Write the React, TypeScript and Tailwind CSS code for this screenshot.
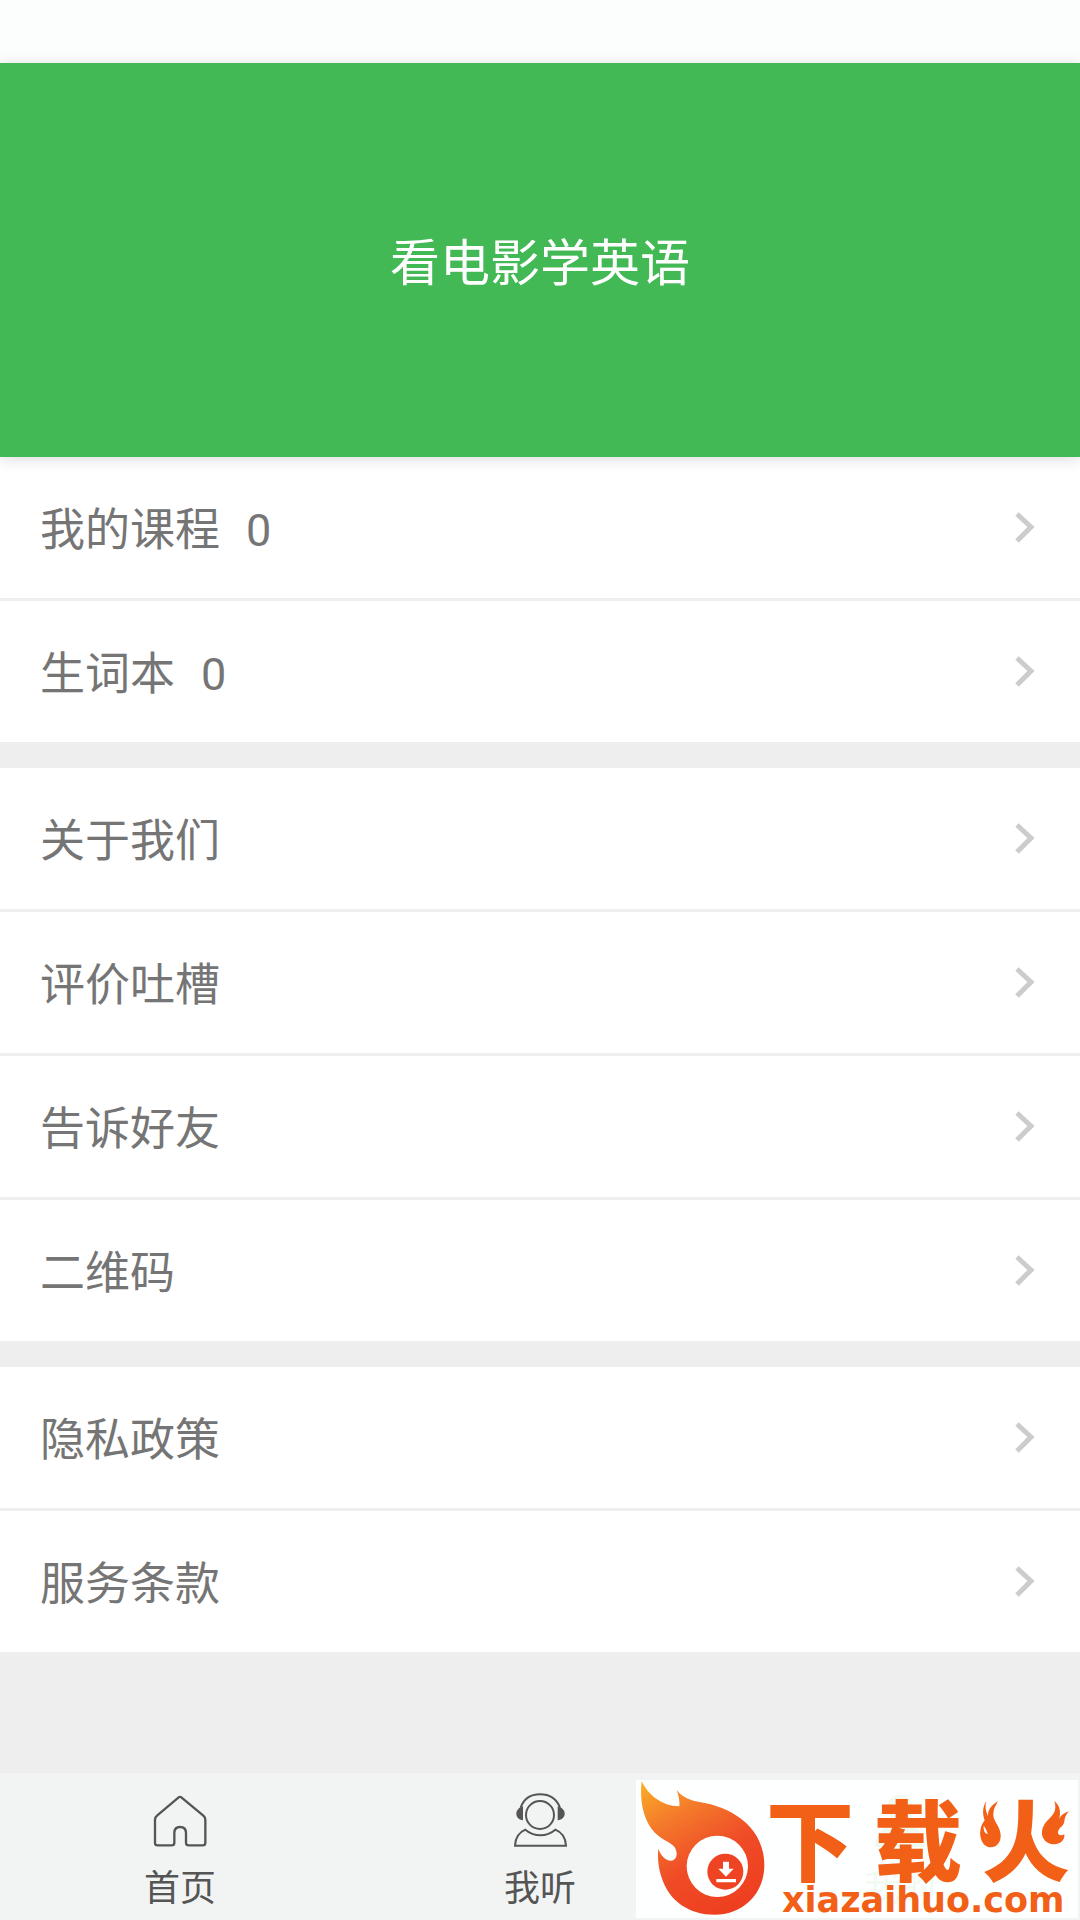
import React from 'react';

interface MenuItem {
  label: string;
  count?: number;
}

interface TabItem {
  label: string;
  icon: React.ReactNode;
  active?: boolean;
}

const menuGroups: MenuItem[][] = [
  [
    { label: '我的课程', count: 0 },
    { label: '生词本', count: 0 },
  ],
  [{ label: '关于我们' }, { label: '评价吐槽' }, { label: '告诉好友' }, { label: '二维码' }],
  [{ label: '隐私政策' }, { label: '服务条款' }],
];

const Chevron = () => (
  <svg className="h-8 w-6" viewBox="0 0 24 32" fill="none" stroke="#cccccc" strokeWidth="5" aria-hidden="true">
    <path d="M5 2 L19 15 L5 29" />
  </svg>
);

const HomeIcon = () => (
  <svg className="size-14" viewBox="156 98 168 168" fill="none" stroke="currentColor" strokeWidth="7" strokeLinejoin="round" aria-hidden="true">
    <path d="M236 111 Q240 108 244 111 L310 166 Q316 171 316 178 V247 Q316 255 308 255 H267 Q258 255 258 247 V218 Q258 200 240 200 Q223 200 223 218 V247 Q223 255 214 255 H173 Q165 255 165 247 V178 Q165 171 171 166 Z" />
  </svg>
);

const ListenIcon = () => (
  <svg className="size-14" viewBox="156 98 168 168" fill="none" stroke="currentColor" strokeWidth="6" aria-hidden="true">
    <circle cx="240" cy="164" r="42" />
    <path d="M182 142 C191 116 213 102 240 102 C268 102 290 116 300 142" />
    <path d="M189 138 V180 C176 178 169 170 169 160 C169 149 178 141 189 138 Z" fill="currentColor" stroke="none" />
    <path d="M293 138 V180 C306 178 314 170 314 160 C314 149 305 141 293 138 Z" fill="currentColor" stroke="none" />
    <path d="M196 208 C222 230 260 230 286 208 C306 216 317 234 318 256 H165 C166 234 177 216 196 208 Z" />
  </svg>
);

const MineIcon = () => (
  <svg className="size-14" viewBox="0 0 56 56" fill="currentColor" aria-hidden="true">
    <circle cx="28" cy="15" r="13" />
    <path d="M3 54 C3 38 14 32 28 32 C42 32 53 38 53 54 Z" />
  </svg>
);

const tabs: TabItem[] = [
  { label: '首页', icon: <HomeIcon /> },
  { label: '我听', icon: <ListenIcon /> },
  { label: '我的', icon: <MineIcon />, active: true },
];

const FlameLogo = () => (
  <svg className="h-[138px] w-32 shrink-0" viewBox="60 60 384 414" aria-hidden="true">
    <defs>
      <linearGradient id="flame" x1="70" y1="70" x2="300" y2="460" gradientUnits="userSpaceOnUse">
        <stop offset="0" stopColor="#fbad26" />
        <stop offset="0.3" stopColor="#f47a2b" />
        <stop offset="0.65" stopColor="#ef4b27" />
        <stop offset="1" stopColor="#ee4020" />
      </linearGradient>
    </defs>
    <path
      fill="url(#flame)"
      d="M71 64 C91 105 130 138 184 139 C186 122 181 105 176 90 C192 111 218 122 248 127 C292 134 334 150 370 177 C413 209 439 258 439 315 C439 401 375 464 290 464 C215 464 153 425 130 350 C121 322 118 294 121 266 C128 287 144 303 160 302 C177 300 181 279 169 260 C154 244 122 236 101 207 C73 168 65 115 71 64 Z"
    />
    <circle cx="298" cy="319" r="92" fill="#fff" />
    <circle cx="322" cy="335" r="54" fill="#ee4424" />
    <path d="M315 305 H333 V326 H347 L324 350 L301 326 H315 Z M295 357 H354 V367 H295 Z" fill="#fff" />
  </svg>
);

// Flames stand in for the two dots of the last character
const TwinFlames = () => (
  <svg className="absolute top-2 -left-2 h-12 w-[100px]" viewBox="400 130 300 144" aria-hidden="true">
    <path d="M400 130 H514 V232 L480 274 H400 Z M592 130 H700 V274 H620 L592 240 Z" fill="#fff" />
    <g fill="#f26018">
      <path d="M437 133 C424 153 426 174 432 191 C421 204 416 225 420 243 C425 263 437 272 450 272 C469 272 481 256 480 235 C479 207 455 193 458 170 C459 155 466 145 472 133 C452 146 441 160 442 178 C435 164 432 149 437 133 Z" />
      <path d="M641 133 C650 163 638 174 621 191 C607 205 600 225 606 241 C613 257 628 263 642 263 C660 262 673 250 671 233 C663 238 653 236 652 229 C652 212 669 211 671 194 C672 182 676 173 685 164 C669 169 658 178 655 190 C661 166 659 148 641 133 Z" />
    </g>
    <path d="M429 207 C428 221 432 231 441 232 C439 222 434 214 429 207 Z" fill="#fff" />
  </svg>
);

const SiteBadge = () => (
  <div className="absolute right-[2px] bottom-[2px] flex bg-white/92 pr-2 pl-0.5 text-[#f26018]">
    <FlameLogo />
    <div className="flex flex-col">
      <div className="flex h-[106px] gap-5 pt-3 font-['Noto_Sans_CJK_SC',sans-serif] text-[88px] leading-[88px] font-black">
        <span>下</span>
        <span>载</span>
        <span className="relative">
          火
          <TwinFlames />
        </span>
      </div>
      <a href="#" className="pl-4 font-['DejaVu_Sans',sans-serif] text-[35px] leading-7 font-bold">
        xiazaihuo.com
      </a>
    </div>
  </div>
);

const MenuRow = ({ item }: { item: MenuItem }) => (
  <li>
    <a href="#" className="flex h-[141px] items-center justify-between pr-11 pl-10">
      <span className="flex items-center pt-1.5">
        {item.label}
        {item.count !== undefined && <span className="ml-[26px]">{item.count}</span>}
      </span>
      <Chevron />
    </a>
  </li>
);

const App = () => {
  return (
    <div className="flex min-h-screen flex-col bg-[#eeeeee] font-[Roboto,'Noto_Sans_CJK_SC',sans-serif]">
      {/* Status bar strip */}
      <div className="h-[63px] bg-[#fcfefe]" />

      <header className="relative flex h-[394px] items-center justify-center bg-[#43b955] pt-2 shadow-[0_2px_14px_rgba(0,0,0,0.14)]">
        <h1 className="text-[50px] leading-[60px] text-white">看电影学英语</h1>
      </header>

      {/* Menu groups */}
      <main className="flex flex-1 flex-col gap-[26px] text-[45px] leading-[54px] text-[#757575]">
        {menuGroups.map((group) => (
          <ul key={group[0].label} className="divide-y-3 divide-[#eeeeee] bg-white">
            {group.map((item) => (
              <MenuRow key={item.label} item={item} />
            ))}
          </ul>
        ))}
      </main>

      {/* Bottom tabs */}
      <nav className="relative grid h-[147px] grid-cols-3 bg-[#f2f4f4]">
        {tabs.map((tab) => (
          <a
            key={tab.label}
            href="#"
            className={`flex flex-col items-center gap-4 pt-5 text-[36px] leading-[48px] ${tab.active ? 'text-[#43b955]' : 'text-[#555555]'}`}
          >
            {tab.icon}
            {tab.label}
          </a>
        ))}
        <SiteBadge />
      </nav>
    </div>
  );
};

export default App;
